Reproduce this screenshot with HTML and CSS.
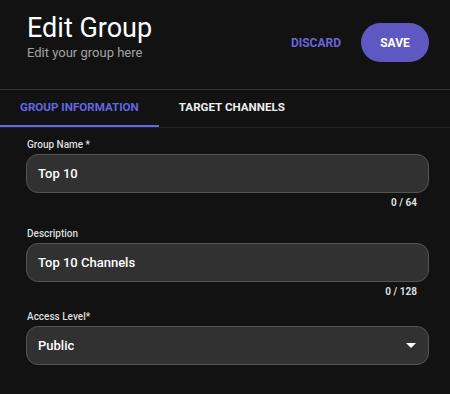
FILE: index.html
```html
<!DOCTYPE html>
<html lang="en">
<head>
    <meta charset="UTF-8">
    <meta name="viewport" content="width=device-width, initial-scale=1.0">
    <title>Edit Group</title>
    <link rel="stylesheet" href="styles.css">
</head>
<body>

    <div class="header">
        <div class="heading">
            <div class="title">Edit Group</div>
            <div class="subtitle">Edit your group here</div>
        </div>
        <div class="actions">
            <button class="discard-button">DISCARD</button>
            <button class="save-button">SAVE</button>
        </div>
    </div>

    <div class="tabs">
        <div class="tab active">GROUP INFORMATION</div>
        <div class="tab">TARGET CHANNELS</div>
    </div>

    <div class="form">
        <div class="field field-first">
            <div class="label">Group Name *</div>
            <div class="input">Top 10</div>
            <div class="counter">0 / 64</div>
        </div>
        <div class="field field-second">
            <div class="label">Description</div>
            <div class="input">Top 10 Channels</div>
            <div class="counter">0 / 128</div>
        </div>
        <div class="field">
            <div class="label">Access Level*</div>
            <div class="input select">
                <span>Public</span>
                <span class="caret"></span>
            </div>
        </div>
    </div>

</body>
</html>
```

FILE: styles.css
```css
body {
    font-family: Roboto, "Liberation Sans", Arial, sans-serif;
    margin: 0;
    background-color: #121212;
    color: #fff;
}

.header {
    display: flex;
    justify-content: space-between;
    align-items: flex-start;
    height: 77px;
    padding: 12px 21px 0 27px;
    border-bottom: 1px solid #333;
}

.title {
    font-size: 27px;
    line-height: 32px;
    color: #fff;
}

.subtitle {
    font-size: 13px;
    line-height: 18px;
    color: #a3a3a3;
}

.actions {
    display: flex;
    align-items: center;
    gap: 20px;
    margin-top: 11px;
}

.discard-button,
.save-button {
    font-family: inherit;
    font-size: 12px;
    font-weight: 700;
    border: none;
    cursor: pointer;
    outline: none;
    padding: 0;
}

.discard-button {
    background: none;
    color: #6a64d9;
}

.save-button {
    width: 68px;
    height: 39px;
    border-radius: 20px;
    background-color: #5f58c2;
    color: #fff;
}

.tabs {
    display: flex;
    border-bottom: 1px solid #242424;
}

.tab {
    padding: 0 20px;
    height: 35px;
    line-height: 35px;
    font-size: 11.6px;
    font-weight: 700;
    color: #eee;
    border-bottom: 2px solid transparent;
}

.tab.active {
    color: #6366e6;
    border-bottom-color: #6366e6;
}

.form {
    padding: 10px 21px 0 26px;
}

.field {
    display: flex;
    flex-direction: column;
}

.field-first {
    margin-bottom: 17px;
}

.field-second {
    margin-bottom: 11px;
}

.label {
    font-size: 10px;
    font-weight: 500;
    line-height: 14px;
    color: #ddd;
    padding-left: 1px;
    margin-bottom: 2px;
}

.input {
    height: 37px;
    line-height: 37px;
    padding: 0 11px;
    border: 1px solid #545454;
    border-radius: 12px;
    background-color: #313131;
    font-size: 13px;
    font-weight: 500;
    color: #fff;
}

.select {
    display: flex;
    justify-content: space-between;
    align-items: center;
}

.caret {
    width: 0;
    height: 0;
    margin-right: 1px;
    border-left: 5px solid transparent;
    border-right: 5px solid transparent;
    border-top: 5px solid #fff;
}

.counter {
    font-size: 10px;
    font-weight: 700;
    line-height: 14px;
    color: #ddd;
    text-align: right;
    padding-right: 12px;
    margin-top: 3px;
}
```
